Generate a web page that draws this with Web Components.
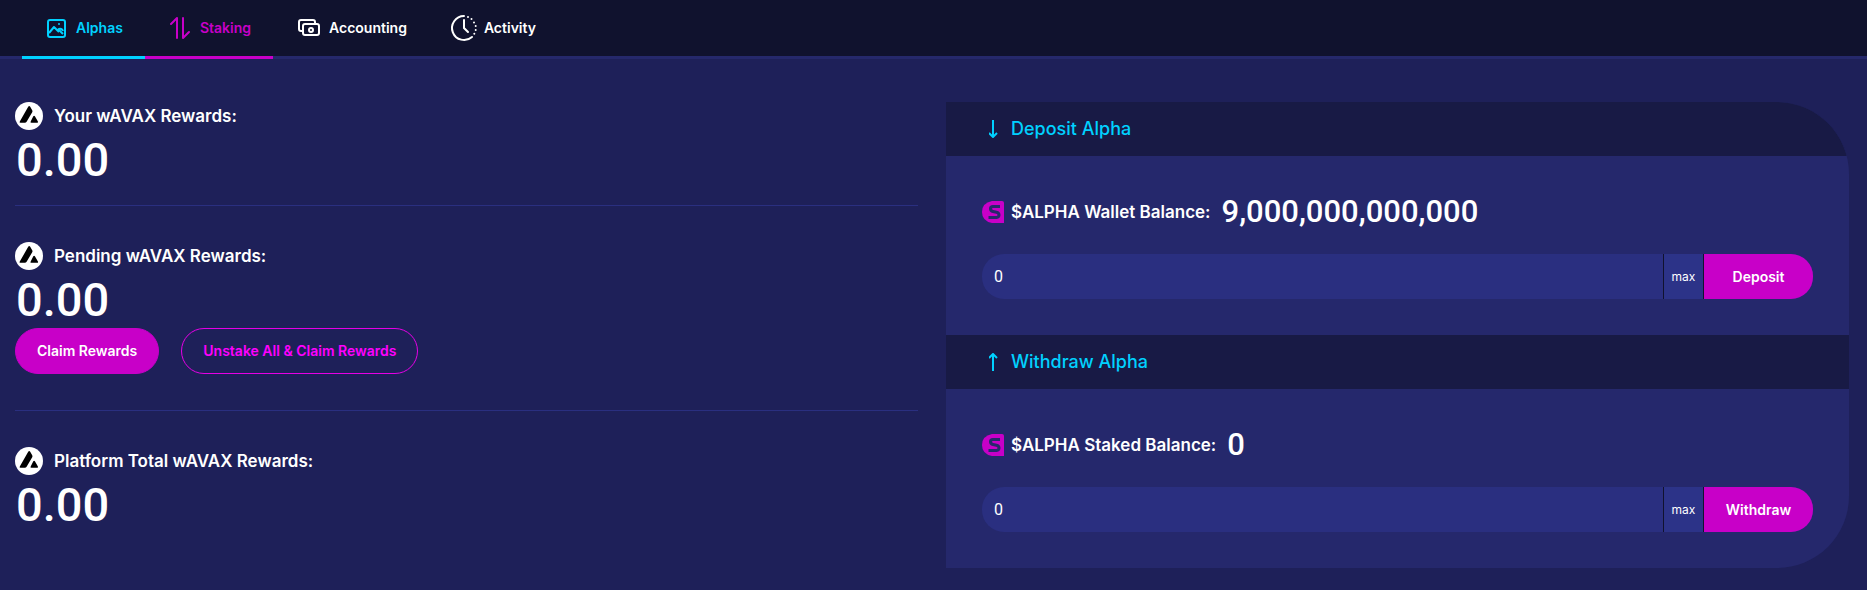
<!DOCTYPE html>
<html lang="en">
<head>
<meta charset="utf-8">
<meta name="viewport" content="width=device-width, initial-scale=1">
<title>Alpha Staking</title>
<style>
  html { background: #1e2059; }
  body {
    margin: 0;
    color: #fff;
    font-family: Inter, Roboto, "Liberation Sans", sans-serif;
    font-weight: 600;
    font-size: 16px;
    --figures: Roboto, Inter, sans-serif;
    --cyan: #00d1ff;
    --magenta: #c800c8;
    --line: #2a2f80;
  }
</style>
</head>
<body>
<staking-app></staking-app>

<script>
const define = (name, html) => {
  const template = document.createElement('template');
  template.innerHTML = html;
  customElements.define(name, class extends HTMLElement {
    constructor() {
      super();
      this.attachShadow({ mode: 'open' }).append(template.content.cloneNode(true));
    }
  });
};

/* Tab of the top bar: icon slot and label */
define('nav-tab', `
<style>
  :host { display: block; --accent: transparent; color: #fff; }
  :host([tone="cyan"]) { --accent: var(--cyan); color: var(--cyan); }
  :host([tone="magenta"]) { --accent: var(--magenta); color: var(--magenta); }
  a {
    box-sizing: border-box; height: 59px; padding: 0 22px 0 25px;
    display: flex; align-items: center; gap: 9px;
    border-bottom: 3px solid var(--accent);
    color: inherit; text-decoration: none; font-size: 14px; line-height: 20px;
  }
  ::slotted(svg) { display: block; flex: none; overflow: visible; }
</style>
<a href="#"><slot name="icon"></slot><slot></slot></a>`);

define('nav-bar', `
<style>
  :host { display: block; background: #10122e; }
  nav { display: flex; height: 59px; padding-left: 22px; box-shadow: inset 0 -3px #25286b; }
</style>
<nav>
  <nav-tab tone="cyan"><svg slot="icon" width="20" height="19" viewBox="0 0 20 19" fill="none" stroke="currentColor" stroke-width="2">
    <rect x="1" y="1" width="17" height="17" rx="2"/><path d="M2 14l5-6 5 5M11 12c0-3 4-3 5 0" stroke-linejoin="round"/><path d="M12 11l4 4" /><circle cx="12" cy="5" r="1" fill="currentColor" stroke="none"/></svg>Alphas</nav-tab>
  <nav-tab tone="magenta"><svg slot="icon" width="21" height="22" viewBox="0 0 21 22" fill="none" stroke="currentColor" stroke-width="2" stroke-linecap="round" stroke-linejoin="round">
    <path d="M1 7l6-6v20M13 1v20l6-6"/></svg>Staking</nav-tab>
  <nav-tab><svg slot="icon" width="22" height="18" viewBox="0 0 22 18" fill="none" stroke="currentColor" stroke-width="2">
    <path d="M5 12H3a2 2 0 0 1-2-2V3a2 2 0 0 1 2-2h12a2 2 0 0 1 2 2v2"/><rect x="5" y="5" width="16" height="11" rx="2"/><circle cx="13" cy="11" r="2"/></svg>Accounting</nav-tab>
  <nav-tab><svg slot="icon" width="21" height="22" viewBox="3 2 21 22" fill="none" stroke="currentColor" stroke-width="2" stroke-linecap="round">
    <path d="M13 1A12 12 0 1 0 21 22"/><path d="M13 5v8l4 4"/><path d="M17 2h0M20.500 4h0M23 7.500h0M24.700 11h0M24.700 15h0M23.300 18.800h0" stroke-width="2"/></svg>Activity</nav-tab>
</nav>`);

/* Rewards figure: token badge, label, amount, optional actions */
define('reward-item', `
<style>
  :host { display: block; }
  .label { display: flex; align-items: center; gap: 11px; height: 28px; font-size: 17px; line-height: 24px; }
  svg { flex: none; display: block; }
  .amount { padding-left: 1px; font-family: var(--figures); font-size: 47px; font-weight: 500; line-height: 60px; margin-bottom: -2px; }
</style>
<div class="label">
  <svg width="28" height="28" viewBox="0 0 28 28"><circle cx="14" cy="14" r="14" fill="#fff"/>
    <path d="M13.200 4.700q1-1.200 2 0l2 3.600q.6 1 0 2l-5.600 9.500q-.6 1-1.800 1H5.500q-1.400 0-.7-1.200zM18.300 14.300q.8-1.300 1.600 0l3 5.200q.6 1.300-.8 1.300h-5.600q-1.600 0-.8-1.300z"/></svg>
  <slot></slot>
</div>
<div class="amount"><slot name="amount"></slot></div>
<slot name="actions"></slot>`);

define('pill-button', `
<style>
  :host { display: inline-block; }
  button {
    box-sizing: border-box; height: 46px; padding: 0 21px; border: 1px solid var(--magenta); border-radius: 23px;
    background: var(--magenta); color: #fff; font: inherit; font-size: 14px; line-height: 20px; cursor: pointer;
  }
  :host([outline]) button { background: none; border-color: #e600e6; color: #f0f; }
</style>
<button type="button"><slot></slot></button>`);

define('rewards-summary', `
<style>
  :host { display: block; }
  hr { height: 1px; margin: 36px 0; border: 0; background: var(--line); }
  hr.near { margin-top: 17px; }
  .actions { display: flex; gap: 22px; }
</style>
<reward-item>Your wAVAX Rewards:<span slot="amount">0.00</span></reward-item>
<hr class="near">
<reward-item>Pending wAVAX Rewards:<span slot="amount">0.00</span>
  <div class="actions" slot="actions">
    <pill-button>Claim Rewards</pill-button>
    <pill-button outline>Unstake All &amp; Claim Rewards</pill-button>
  </div>
</reward-item>
<hr>
<reward-item>Platform Total wAVAX Rewards:<span slot="amount">0.00</span></reward-item>`);

/* Amount box with its "max" shortcut and submit button */
define('amount-field', `
<style>
  :host { display: block; }
  form { display: flex; height: 45px; margin: 0; border-radius: 22px; overflow: hidden; background: #2a2f80; }
  input, button { box-sizing: border-box; margin: 0; border: 0; border-radius: 0; font: inherit; color: #fff; }
  input { flex: 1; min-width: 0; padding: 0 12px; background: none; font-family: var(--figures); font-size: 16px; font-weight: 400; outline: 0; }
  button { cursor: pointer; }
  .max { width: 41px; padding: 0; border: 1px solid #10122e; border-width: 0 1px; background: #2c3388; font-size: 12px; font-weight: 400; }
  .send { width: 109px; padding: 0; background: var(--magenta); font-size: 14px; }
</style>
<form onsubmit="return false">
  <input type="text" inputmode="decimal" value="0" aria-label="Amount">
  <button class="max" type="button">max</button>
  <button class="send" type="submit"><slot></slot></button>
</form>`);

define('stake-section', `
<style>
  :host { display: block; }
  h2 {
    display: flex; align-items: center; gap: 13px; height: 54px; margin: 0; padding: 0 43px; box-sizing: border-box;
    background: #181a45; color: var(--cyan); font-size: 18px; font-weight: 500; line-height: 24px;
  }
  .body { padding: 37px 36px 36px; }
  .balance { display: flex; align-items: center; gap: 7px; height: 38px; margin-bottom: 23px; font-size: 17px; line-height: 24px; }
  .value { margin-left: 4px; font-family: var(--figures); font-size: 31px; line-height: 38px; font-weight: 500; }
  svg { display: block; flex: none; }
</style>
<h2><slot name="arrow"></slot><slot name="title"></slot></h2>
<div class="body">
  <div class="balance">
    <svg width="22" height="22" viewBox="0 0 22 22"><path d="M10 0h10q2 0 2 2v20H10Q0 20 0 11T10 0z" fill="#c800c8"/>
      <path d="M18 5.500h-7q-2.500 0-2.500 2.200t2.500 2.800l3.500.8q2.500.6 2.500 2.800t-2.500 2.400H6.500" fill="none" stroke="#25286c" stroke-width="3"/></svg>
    <slot name="label"></slot>
    <span class="value"><slot name="value"></slot></span>
  </div>
  <amount-field><slot name="action"></slot></amount-field>
</div>`);

define('stake-panel', `
<style>
  :host { display: block; background: #25286c; border-radius: 0 72px 72px 0; overflow: hidden; }
  svg { display: block; }
</style>
<stake-section>
  <svg slot="arrow" width="9" height="18" viewBox="0 0 9 18" fill="none" stroke="currentColor" stroke-width="2"><path d="M4 0v17M0 13l4 4 4-4"/></svg>
  <span slot="title">Deposit Alpha</span>
  <span slot="label">$ALPHA Wallet Balance:</span>
  <span slot="value">9,000,000,000,000</span>
  <span slot="action">Deposit</span>
</stake-section>
<stake-section>
  <svg slot="arrow" width="9" height="18" viewBox="0 0 9 18" fill="none" stroke="currentColor" stroke-width="2"><path d="M4 18V1M0 5l4-4 4 4"/></svg>
  <span slot="title">Withdraw Alpha</span>
  <span slot="label">$ALPHA Staked Balance:</span>
  <span slot="value">0</span>
  <span slot="action">Withdraw</span>
</stake-section>`);

define('staking-app', `
<style>
  :host { display: block; }
  main { display: grid; grid-template-columns: 1fr 1fr; gap: 28px; align-items: start; padding: 43px 18px 22px 15px; }
</style>
<nav-bar></nav-bar>
<main><rewards-summary></rewards-summary><stake-panel></stake-panel></main>`);
</script>
</body>
</html>
